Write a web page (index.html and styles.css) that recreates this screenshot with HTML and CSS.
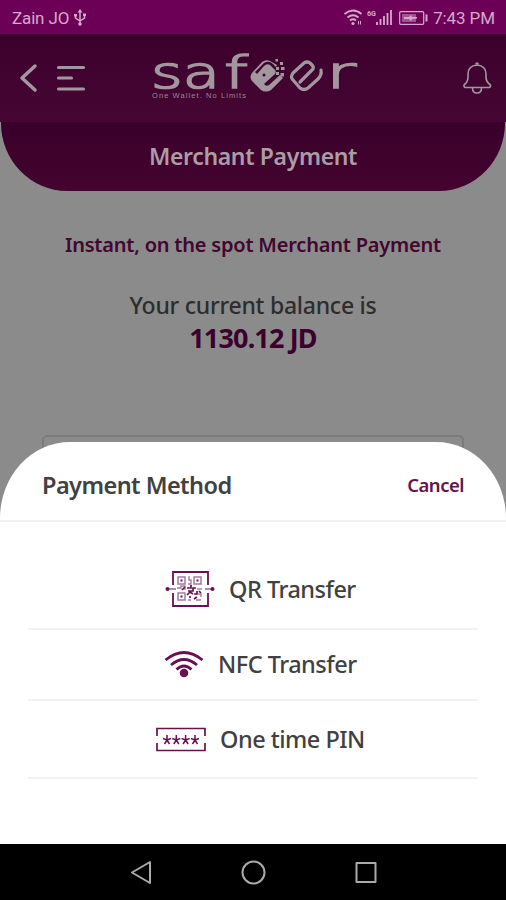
FILE: index.html
```html
<!DOCTYPE html>
<html lang="en">
<head>
<meta charset="utf-8">
<title>Merchant Payment</title>
<link rel="stylesheet" href="styles.css">
</head>
<body>
<main class="phone">
  <header class="status">
    <span class="carrier">Zain JO</span>
    <svg class="usb" width="12" height="18" viewBox="0 0 12 18" fill="none" stroke="currentColor" stroke-width="1.5"><path d="M6 2v13M1.500 6v3L6 12M10.500 5.500V9L6 12"/><path d="M6 0l2.500 3.500h-5zM0 5h3v2.500H0zM9 4.500h3V7H9z" fill="currentColor" stroke="none"/><circle cx="6" cy="15" r="1.800" fill="currentColor" stroke="none"/></svg>
    <svg class="signals" width="84" height="20" viewBox="345 8 84 20" fill="none" stroke="currentColor">
      <path d="M345.500 14q8.500-7 17 0M348.500 17.500q5.500-4.500 11 0M351 20.500q3-2.500 6 0" stroke-width="1.800"/>
      <circle cx="354" cy="23.500" r="1.600" fill="currentColor" stroke="none"/><path d="M359.500 21v3.500M361.500 21v3.500" stroke-width="1"/>
      <text class="net" x="368" y="15.500" textLength="9" lengthAdjust="spacingAndGlyphs">6G</text>
      <path d="M378 22v3M381.500 19v6M385 16v9M388.500 13v12M392 10v15" stroke-width="1.800"/>
      <rect x="400.700" y="11.700" width="24" height="12.600" rx="1" stroke-width="1.200"/><path class="charge" d="M403 14h14v8h-14z"/><path d="M427.500 14.500v7" stroke-width="2"/><path d="M405 17l5 0 2-2 1 2h5v1.500l-5 .5-1 2-2-2h-5z" fill="currentColor" stroke="none"/>
    </svg>
    <time>7:43 PM</time>
  </header>
  <nav class="topbar">
    <svg width="506" height="88" viewBox="0 34 506 88" fill="none">
      <g class="ink" stroke-linecap="round" stroke-linejoin="round"><path d="M35 66L22 78l13 12" stroke-width="3.500"/><path d="M58.500 67.500h25M58.500 78h13M58.500 89h25" stroke-width="3.200"/></g>
      <g class="wordmark">
        <text x="151" y="87.500" textLength="69" lengthAdjust="spacingAndGlyphs">sa</text>
        <text x="224" y="87.500" textLength="24" lengthAdjust="spacingAndGlyphs">f</text>
        <text x="326" y="87.500" textLength="30" lengthAdjust="spacingAndGlyphs">r</text>
      </g>
      <path class="mark" d="M277 65l-7-4q-4-2-8 1l-10 11q-3 4 0 8l9 9q5 3 10 0l12-12-3-3-11 10q-3 2-5-1l11-10q2-3-1-5l-4-4q-3-2-6 1l-7 8-2-2 9-9q5-3 9 1l3 3z"/>
      <circle class="hole" cx="264" cy="75" r="1.500"/>
      <path class="pixels" d="M275.500 59h2.500v2.500h-2.500zM280 62h3v3h-3zM276 67h3v3h-3zM281 67h3.500v3H281zM276 72h3v3h-3zM280.500 73h3.500v3.500h-3.500z"/>
      <g class="ink" stroke-linejoin="round" stroke-linecap="round" stroke-width="3.200"><path d="M300 82l13-13q1-2-1-4l-2-2q-3-2-6 0L293 73q-3 4 0 7l7 8q4 3 8 0l10-9q4-4 3-9"/></g>
      <text class="tagline" x="152" y="98" textLength="94">One Wallet. No Limits</text>
      <g class="ink" stroke-width="1.600" stroke-linejoin="round"><path d="M465 87.500q-1.500-1-1-2.500 4-3 4-8v-3q0-8 9-9 9 1 9 9v3q0 5 4.500 8 .5 1.500-1 2.500z"/><path d="M472.500 88q0 5 4.500 5t4.500-5M475.500 64.500q1.500-3 3 0"/></g>
    </svg>
  </nav>
  <section class="hero"><h1>Merchant Payment</h1></section>
  <section class="balance">
    <h2>Instant, on the spot Merchant Payment</h2>
    <p>Your current balance is</p>
    <strong>1130.12 JD</strong>
    <div class="field"></div>
  </section>
  <section class="sheet">
    <header class="sheet-head"><h3>Payment Method</h3><button>Cancel</button></header>
    <div class="options">
      <div class="option qr">
        <svg width="50" height="38" viewBox="0 0 50 38" fill="none" stroke="currentColor">
          <path d="M8 15V2h35v13M8 23v13h35V23" stroke-width="1.800"/><path d="M3 19h8M40 19h8" stroke-width="1"/>
          <circle cx="2.500" cy="19" r="2" fill="currentColor" stroke="none"/><circle cx="47.500" cy="19" r="2" fill="currentColor" stroke="none"/>
          <g class="soft"><path d="M13 7h7v7h-7zM29 7h7v7h-7zM13 23h7v7h-7z" stroke-width="1.500"/><path d="M24 6v4h2v4h-3M12 18h4v-2h4v4M32 19h5M33 24h3v3M31 30h5M23 30h3" stroke-width="1.400"/></g>
          <path d="M15.500 9.500h2v2h-2zM31.500 9.500h2v2h-2zM15.500 25.500h2v2h-2z" fill="currentColor" stroke="none"/>
          <path d="M17 20l3-3M22 18h4v-3M23 21h5v-3h3M22 25l3-3 3 2M29 24h3v-3M25 28v-2M29 29l3-2M34 21l2 2" stroke-width="1.700"/>
        </svg><span>QR Transfer</span>
      </div>
      <div class="option nfc">
        <svg width="40" height="28" viewBox="0 0 40 28" fill="none" stroke="currentColor" stroke-width="2.800"><path d="M1.500 10q18.500-15 37 0M7 15q13-11 26 0M12.500 19.500q7.500-7 15 0"/><circle cx="20" cy="23" r="4.300" fill="currentColor" stroke="none"/></svg><span>NFC Transfer</span>
      </div>
      <div class="option pin">
        <svg width="50" height="25" viewBox="0 0 50 25" fill="none" stroke="currentColor"><path d="M1 9V1.500h48V9M1 16v7.500h48V16" stroke-width="1.700"/><path d="M11 8v5m-4-1.500 4 1.500 4-1.500M11 13l-2.500 4M11 13l2.500 4M20.300 8v5m-4-1.500 4 1.500 4-1.500M20.300 13l-2.500 4M20.300 13l2.500 4M29.600 8v5m-4-1.500 4 1.500 4-1.500M29.600 13l-2.500 4M29.600 13l2.500 4M39 8v5m-4-1.500 4 1.500 4-1.500M39 13l-2.500 4M39 13l2.500 4" stroke-width="1.500"/></svg><span>One time PIN</span>
      </div>
    </div>
  </section>
  <footer class="android">
    <svg width="506" height="56" viewBox="0 844 506 56" fill="none" stroke="currentColor" stroke-width="2" stroke-linejoin="round"><path d="M150 862v21l-18-10.500z"/><circle cx="253.500" cy="872.500" r="11"/><path d="M356.500 863h19v19h-19z"/></svg>
  </footer>
</main>
</body>
</html>
```
FILE: styles.css
```css
* { box-sizing: border-box; }
body { margin: 0; }
h1, h2, h3, p { margin: 0; }
svg { display: block; flex: none; }
.phone { position: relative; display: flex; flex-direction: column; width: 506px; height: 900px; overflow: hidden; background: #8b8b8b; font-family: "Noto Sans", "Open Sans", sans-serif; white-space: nowrap; }
.status { display: flex; align-items: center; height: 34px; flex: none; padding: 2px 11px 0 12px; background: #6c0057; color: #d5a9cb; font: 17px/32px Roboto, sans-serif; }
.carrier { letter-spacing: -.15px; }
.usb { margin-left: 5px; }
.signals { margin-left: auto; }
.status time { margin-left: 5px; letter-spacing: -.1px; }
.net { fill: currentColor; stroke: none; font: bold 7px Roboto, sans-serif; }
.charge { fill: #a35296; stroke: none; }
.topbar { height: 88px; flex: none; background: linear-gradient(#3c002c, #460633); }
.ink { stroke: #a3979f; }
.wordmark { fill: #a3979f; stroke: #a3979f; stroke-width: 1.6px; font: 200 44px "DejaVu Sans", sans-serif; }
.mark, .pixels { fill: #a3979f; }
.hole { fill: #40002f; }
.tagline { fill: #9b8795; font: 7.5px "Liberation Sans", sans-serif; }
.hero { display: flex; justify-content: center; height: 69px; flex: none; margin: 0 1px; border-radius: 0 0 66px 66px / 0 0 68px 68px; background: linear-gradient(#39002b, #44042f); color: #aa9da6; }
.hero h1 { padding-top: 17px; font-size: 23px; line-height: 34px; font-weight: 600; letter-spacing: -.35px; }
.balance { display: flex; flex-direction: column; align-items: center; padding-top: 39px; color: #2d2d2d; }
.balance h2 { color: #42062f; font-size: 20px; line-height: 30px; font-weight: 600; letter-spacing: -.2px; }
.balance p { margin-top: 28px; font-size: 23px; line-height: 34px; font-weight: 500; letter-spacing: -.25px; }
.balance strong { color: #3c002d; font-size: 27px; line-height: 32px; font-weight: 700; letter-spacing: -.85px; }
.field { width: 422px; height: 50px; margin-top: 81px; border: 2px solid #7a7a7a; border-radius: 5px; }
.sheet { position: absolute; top: 442px; left: 0; width: 506px; height: 402px; border-radius: 70px 70px 0 0 / 76px 76px 0 0; background: #fff; color: #414141; }
.sheet-head { display: flex; justify-content: space-between; align-items: center; height: 80px; padding: 7px 42px 0; border-bottom: 2px solid #f2f2f2; }
.sheet h3 { font-size: 23.5px; font-weight: 600; letter-spacing: -.55px; }
.sheet button { padding: 0; border: 0; background: none; color: #66124f; font: 600 18.5px "Noto Sans", sans-serif; letter-spacing: -.5px; }
.options { margin: 0 28px; }
.option { display: flex; align-items: center; border-bottom: 2px solid #f2f2f2; font-size: 23.5px; line-height: 34px; font-weight: 500; letter-spacing: -.5px; }
.option svg { color: #671151; }
.qr { height: 108px; padding: 27px 0 0 137px; gap: 14px; }
.nfc { height: 71px; padding: 0 0 2px 136px; gap: 14px; }
.pin { height: 78px; padding-left: 128px; gap: 14px; }
.soft { stroke: #a879a0; }
.android { position: absolute; top: 844px; left: 0; width: 506px; height: 56px; background: #000; color: #aaa; }
```
